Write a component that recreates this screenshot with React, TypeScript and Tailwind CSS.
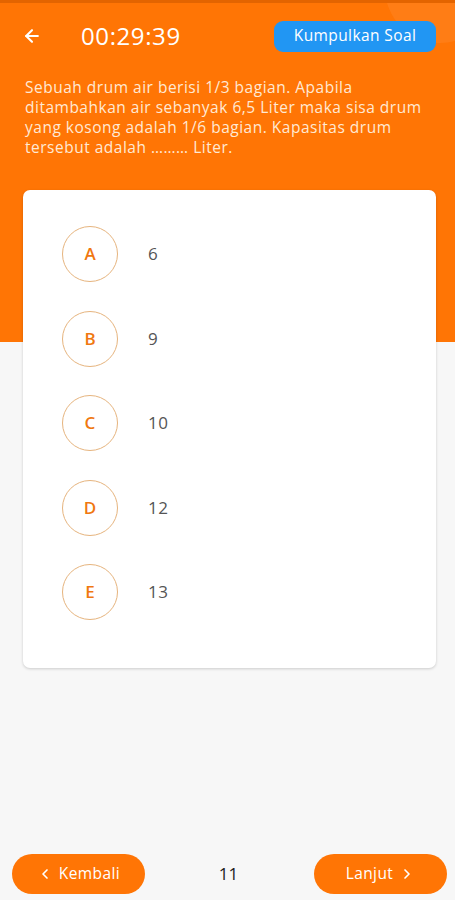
import { ArrowLeft, ChevronLeft, ChevronRight } from "lucide-react";

const options = [
  { key: "A", value: "6" },
  { key: "B", value: "9" },
  { key: "C", value: "10" },
  { key: "D", value: "12" },
  { key: "E", value: "13" },
];

function OptionRow({ label, value }: { label: string; value: string }) {
  return (
    <div className="flex items-center">
      <div className="w-[56px] h-[56px] rounded-full border-[1.5px] border-[#e6b47e] flex items-center justify-center text-[#f07810] text-[17px] font-semibold">
        {label}
      </div>
      <span className="ml-[30px] text-[17px] text-[#555] tracking-[0.5px]">{value}</span>
    </div>
  );
}

export default function App() {
  return (
    <div
      className="relative h-[900px] w-full bg-[#f7f7f7] flex flex-col overflow-hidden"
      style={{ fontFamily: "'Open Sans', Lato, sans-serif" }}
    >
      <header className="relative bg-[#ff7505] h-[342px] overflow-hidden border-t-[3px] border-[#e36400]">
        <div className="absolute -top-[70px] -right-[40px] w-[110px] h-[110px] rounded-full bg-[#ff8a2e]/40" />
        <div className="relative flex items-center pl-[22px] pr-[19px] pt-[15px]">
          <ArrowLeft size={20} strokeWidth={2.5} className="text-white" />
          <span className="ml-[39px] text-white text-[24px] font-medium tracking-[0.6px]">
            00:29:39
          </span>
          <button className="ml-auto h-[31px] w-[162px] rounded-[9px] bg-[#2196f3] text-white text-[15.5px] font-medium tracking-[0.4px]">
            Kumpulkan Soal
          </button>
        </div>
        <p className="relative mt-[23px] pl-[25px] pr-[10px] text-[#ffe9d4] text-[15.5px] leading-[20px] tracking-[0.5px]">
          Sebuah drum air berisi 1/3 bagian. Apabila
          <br />
          ditambahkan air sebanyak 6,5 Liter maka sisa drum
          <br />
          yang kosong adalah 1/6 bagian. Kapasitas drum
          <br />
          tersebut adalah ……… Liter.
        </p>
      </header>

      <div className="ml-[23px] mr-[19px] -mt-[152px] relative bg-white rounded-[7px] shadow-[0_1px_3px_rgba(0,0,0,0.18)] pt-[36px] pb-[48px] pl-[39px] flex flex-col gap-[28.5px]">
        {options.map((o) => (
          <OptionRow key={o.key} label={o.key} value={o.value} />
        ))}
      </div>

      <div className="mt-auto mb-[6px] pl-[12px] pr-[8px] flex items-center justify-between">
        <button className="h-[40px] w-[133px] rounded-full bg-[#ff7505] text-white text-[15.5px] tracking-[0.4px] flex items-center justify-center gap-[6px]">
          <ChevronLeft size={16} strokeWidth={2.5} />
          Kembali
        </button>
        <span className="text-[17px] text-[#222] -ml-[2px]">11</span>
        <button className="h-[40px] w-[133px] rounded-full bg-[#ff7505] text-white text-[15.5px] tracking-[0.4px] flex items-center justify-center gap-[6px]">
          Lanjut
          <ChevronRight size={16} strokeWidth={2.5} />
        </button>
      </div>
    </div>
  );
}
